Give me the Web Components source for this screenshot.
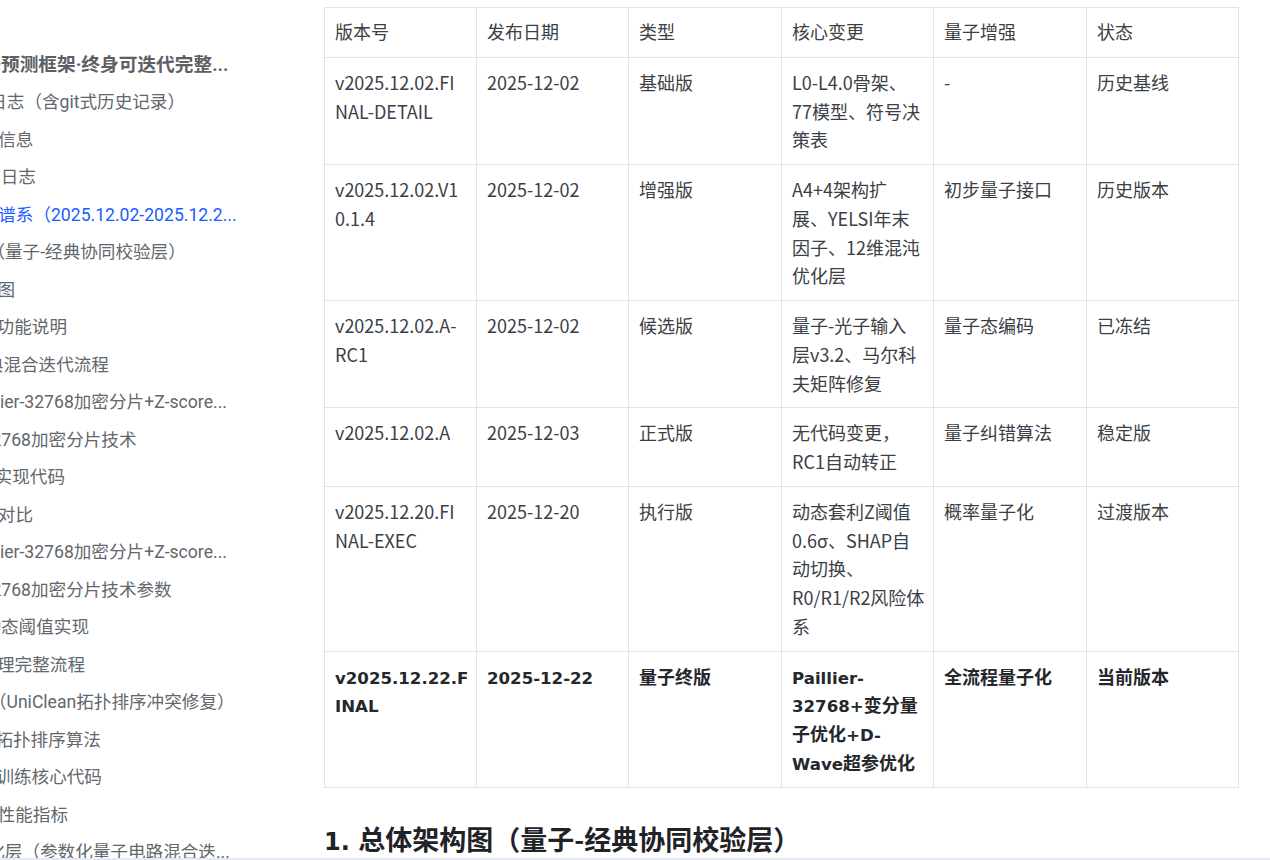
<!DOCTYPE html>
<html lang="zh"><head><meta charset="utf-8">
<style>
html,body{margin:0;padding:0;height:100%;background:#fff;overflow:hidden}
body{font-family:"Noto Sans CJK SC","Noto Sans",sans-serif}
doc-page{height:860px}
</style></head><body>
<doc-page>
 <toc-nav slot="nav">
  <toc-item strong cut="36.4">量子预测框架·终身可迭代完整...</toc-item>
  <toc-item cut="46">版本日志（含git式历史记录）</toc-item>
  <toc-item cut="37">基本信息</toc-item>
  <toc-item cut="34.5">版本日志</toc-item>
  <toc-item active cut="37">版本谱系（2025.12.02-2025.12.2...</toc-item>
  <toc-item cut="65.4">架构图（量子-经典协同校验层）</toc-item>
  <toc-item cut="37.8">架构图</toc-item>
  <toc-item cut="38.6">各层功能说明</toc-item>
  <toc-item cut="31.8">经典混合迭代流程</toc-item>
  <toc-item cut="33.5">Paillier-32768加密分片+Z-score...</toc-item>
  <toc-item cut="18.5">32768加密分片技术</toc-item>
  <toc-item cut="40.6">分层实现代码</toc-item>
  <toc-item cut="37.4">性能对比</toc-item>
  <toc-item cut="33.5">Paillier-32768加密分片+Z-score...</toc-item>
  <toc-item cut="18.5">32768加密分片技术参数</toc-item>
  <toc-item cut="16.6">动态阈值实现</toc-item>
  <toc-item cut="20.6">处理完整流程</toc-item>
  <toc-item cut="63.9">清洗层（UniClean拓扑排序冲突修复）</toc-item>
  <toc-item cut="39.8">冲突拓扑排序算法</toc-item>
  <toc-item cut="38.8">模型训练核心代码</toc-item>
  <toc-item cut="37.6">模型性能指标</toc-item>
  <toc-item cut="48">量子化层（参数化量子电路混合迭...</toc-item>
 </toc-nav>
 <doc-article slot="main">
  <version-table></version-table>
  <section-title><span class="n">1. </span>总体架构图（量子-经典协同校验层）</section-title>
 </doc-article>
</doc-page>
<script>
function def(name,html,extra){
  customElements.define(name,class extends HTMLElement{
    constructor(){super();this.attachShadow({mode:"open"}).innerHTML=html;}
    connectedCallback(){if(extra)extra.call(this);}
  });
}
def("doc-page",`<style>
:host{display:flex;flex-direction:column;width:100%;height:860px;overflow:hidden;background:#fff}
.top{flex:1;display:flex;min-height:0;overflow:hidden}
.nav{flex:0 0 324px;overflow:hidden}
.main{flex:1;min-width:0;overflow:hidden;padding:7px 31px 0 0}
.bar{flex:0 0 2px;background:#e6e8f3}
</style><div class="top"><div class="nav"><slot name="nav"></slot></div><div class="main"><slot name="main"></slot></div></div><div class="bar"></div>`);
def("toc-nav",`<style>
:host{display:block;width:236px;overflow:hidden;padding-top:46.5px}
</style><slot></slot>`);
def("toc-item",`<style>
:host{display:block;height:37.5px;line-height:37.5px;font-family:Roboto,"Noto Sans CJK SC",sans-serif;font-size:17.6px;color:#62676d;white-space:nowrap;overflow:hidden;margin-left:calc(var(--cut,0) * -1px)}
:host([strong]){font-weight:700;color:#5c6066;font-size:18.7px}
:host([active]){color:#1a5cff}
</style><slot></slot>`,function(){const c=+(this.getAttribute("cut")||0);this.style.setProperty("--cut",c);this.style.width=(236+c)+"px";});
def("doc-article",`<style>:host{display:block}</style><slot></slot>`);
const L=s=>`<span class="l">${s}</span>`;
const rows=[
["版本号","发布日期","类型","核心变更","量子增强","状态"],
["v2025.12.02.FI<br>NAL-DETAIL","2025-12-02","基础版","L0-L4.0骨架、<br>77模型、符号决<br>策表","-","历史基线"],
["v2025.12.02.V1<br>0.1.4","2025-12-02","增强版","A4+4架构扩<br>展、YELSI年末<br>因子、12维混沌<br>优化层","初步量子接口","历史版本"],
["v2025.12.02.A-<br>RC1","2025-12-02","候选版","量子-光子输入<br>层v3.2、马尔科<br>夫矩阵修复","量子态编码","已冻结"],
["v2025.12.02.A","2025-12-03","正式版","无代码变更，<br>RC1自动转正","量子纠错算法","稳定版"],
["v2025.12.20.FI<br>NAL-EXEC","2025-12-20","执行版","动态套利Z阈值<br>0.6σ、SHAP自<br>动切换、<br>R0/R1/R2风险体<br>系","概率量子化","过渡版本"],
[L("v2025.12.22.F")+"<br>"+L("INAL"),L("2025-12-22"),"量子终版",L("Paillier-")+"<br>"+L("32768+")+"变分量<br>子优化"+L("+D-")+"<br>"+L("Wave")+"超参优化","全流程量子化","当前版本"]];
def("version-table",`<style>
:host{display:block}
table{border-collapse:collapse;table-layout:fixed;width:915px;font-size:18px;line-height:28.75px;color:#3b4046}
td{border:1px solid #e1e3e6;padding:10px;vertical-align:top;white-space:nowrap}
tr.h td{padding:9px 10px 11px}
.b td{font-weight:700;color:#24272b}
.l{font-family:"DejaVu Sans","Noto Sans CJK SC",sans-serif;font-size:16.6px;line-height:1}
</style><table><colgroup><col style="width:152px"><col style="width:152px"><col style="width:153px"><col style="width:152px"><col style="width:153px"><col style="width:152px"></colgroup><tbody>${rows.map((r,i)=>`<tr class="${i==6?'b':i==0?'h':''}">${r.map(c=>`<td>${c}</td>`).join("")}</tr>`).join("")}</tbody></table>`);
def("section-title",`<style>
:host{display:block;margin-top:30.5px;font-size:27px;line-height:42px;font-weight:700;color:#1f2328}
::slotted(.n){font-family:"DejaVu Sans",sans-serif;font-size:24px}
</style><slot></slot>`);
</script>
</body></html>
